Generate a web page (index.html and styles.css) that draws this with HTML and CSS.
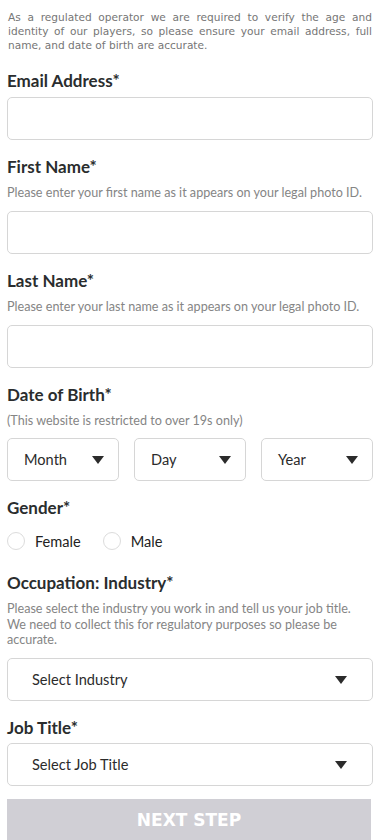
FILE: index.html
```html
<!DOCTYPE html>
<html lang="en">
<head>
<meta charset="utf-8">
<meta name="viewport" content="width=380">
<title>Registration</title>
<link rel="stylesheet" href="styles.css">
</head>
<body>
<form class="form">
  <p class="intro">As a regulated operator we are required to verify the age and identity of our players, so please ensure your email address, full name, and date of birth are accurate.</p>

  <div class="field field-first">
    <label class="label">Email Address*</label>
    <input class="input input-nohint" type="email">
  </div>

  <div class="field">
    <label class="label">First Name*</label>
    <p class="hint">Please enter your first name as it appears on your legal photo ID.</p>
    <input class="input" type="text">
  </div>

  <div class="field">
    <label class="label">Last Name*</label>
    <p class="hint">Please enter your last name as it appears on your legal photo ID.</p>
    <input class="input" type="text">
  </div>

  <div class="field">
    <label class="label">Date of Birth*</label>
    <p class="hint">(This website is restricted to over 19s only)</p>
    <div class="dob">
      <div class="select small"><span>Month</span><span class="arrow"></span></div>
      <div class="select small"><span>Day</span><span class="arrow"></span></div>
      <div class="select small"><span>Year</span><span class="arrow"></span></div>
    </div>
  </div>

  <div class="field">
    <label class="label">Gender*</label>
    <div class="radios">
      <label class="radio"><span class="circle"></span>Female</label>
      <label class="radio"><span class="circle"></span>Male</label>
    </div>
  </div>

  <div class="field field-occ">
    <label class="label">Occupation: Industry*</label>
    <p class="hint hint-multi">Please select the industry you work in and tell us your job title. We need to collect this for regulatory purposes so please be accurate.</p>
    <div class="select wide"><span>Select Industry</span><span class="arrow"></span></div>
  </div>

  <div class="field">
    <label class="label">Job Title*</label>
    <div class="select wide input-nohint"><span>Select Job Title</span><span class="arrow"></span></div>
  </div>

  <button type="button" class="next">NEXT STEP</button>
</form>
</body>
</html>
```

FILE: styles.css
```css
* { box-sizing: border-box; }
html, body { margin: 0; padding: 0; background: #fff; }
body { font-family: Lato, "Noto Sans", sans-serif; color: #2b2b2b; }

.form { padding: 10px 7px 0 7px; display: flex; flex-direction: column; }

.intro {
  margin: 0 1px;
  font-family: "DejaVu Sans", Verdana, sans-serif;
  font-size: 10.6px;
  line-height: 14px;
  color: #767676;
  text-align: justify;
}

.field { margin-top: 17px; display: flex; flex-direction: column; }
.field-first { margin-top: 19px; }
.field-occ { margin-top: 23px; }

.label {
  font-size: 17px;
  font-weight: 700;
  line-height: 20px;
  color: #2a2d2e;
}

.hint {
  margin: 8px 0 0 0;
  font-size: 12.6px;
  line-height: 16px;
  color: #858585;
}
.hint-multi { line-height: 15.5px; padding-right: 4px; }

.input {
  margin-top: 10px;
  height: 43px;
  width: 100%;
  border: 1px solid #d6d6d6;
  border-radius: 5px;
  background: #fff;
}
.input-nohint { margin-top: 6px; }

.dob { margin-top: 9px; display: flex; gap: 15px; }

.select {
  height: 43px;
  border: 1px solid #d6d6d6;
  border-radius: 5px;
  display: flex;
  align-items: center;
  justify-content: space-between;
  font-size: 14.6px;
  color: #2b2b2b;
  background: #fff;
}
.select.small { flex: 1; padding: 0 14px 0 16px; }
.select.wide { margin-top: 10px; padding: 0 25px 0 24px; }
.select.wide.input-nohint { margin-top: 5px; }

.arrow {
  width: 0; height: 0;
  border-left: 6.5px solid transparent;
  border-right: 6.5px solid transparent;
  border-top: 8px solid #2b2b2b;
  margin-top: 1px;
}

.radios { margin-top: 14px; display: flex; gap: 22px; height: 18px; align-items: center; }
.radio { display: flex; align-items: center; font-size: 14.6px; color: #222; }
.circle {
  width: 18px; height: 18px;
  border: 1px solid #dcdcdc;
  border-radius: 50%;
  margin-right: 10px;
  background: #fff;
}

.next {
  margin: 13px 2px 0 0;
  height: 42px;
  flex-shrink: 0;
  border: none;
  background: #d0cfd5;
  color: #fff;
  font-family: "DejaVu Sans", Verdana, sans-serif;
  font-weight: 700;
  font-size: 17px;
  padding-top: 2px;
}
```
